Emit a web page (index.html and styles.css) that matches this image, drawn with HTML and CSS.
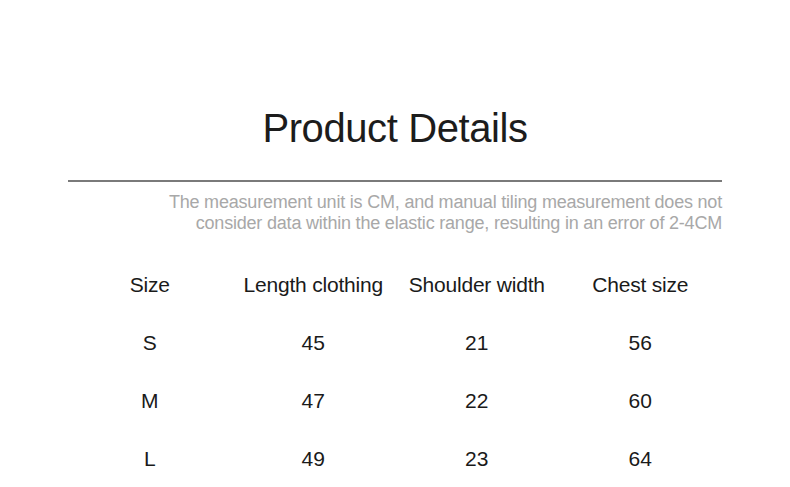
FILE: index.html
```html
<!DOCTYPE html>
<html>
<head>
<meta charset="utf-8">
<link rel="stylesheet" href="styles.css">
</head>
<body>
<div class="page">
  <h1 class="title">Product Details</h1>
  <div class="rule"></div>
  <p class="note">The measurement unit is CM, and manual tiling measurement does not<br>consider data within the elastic range, resulting in an error of 2-4CM</p>
  <div class="table">
    <div class="row head"><span>Size</span><span>Length clothing</span><span>Shoulder width</span><span>Chest size</span></div>
    <div class="row"><span>S</span><span>45</span><span>21</span><span>56</span></div>
    <div class="row"><span>M</span><span>47</span><span>22</span><span>60</span></div>
    <div class="row"><span>L</span><span>49</span><span>23</span><span>64</span></div>
  </div>
</div>
</body>
</html>
```
FILE: styles.css
```css
html, body { margin: 0; padding: 0; background: #fff; }
body { font-family: "Liberation Sans", Arial, sans-serif; color: #1a1a1a; }
.page { width: 654px; margin: 0 auto; padding-top: 104px; }
.title { margin: 0; font-size: 40px; line-height: 48px; font-weight: 400; text-align: center; letter-spacing: -0.4px; color: #1c1c1c; }
.rule { height: 2px; background: #7a7a7a; margin-top: 28px; }
.note { margin: 10px 0 0; font-size: 18px; line-height: 21px; text-align: right; color: #a8a8a8; letter-spacing: -0.2px; }
.table { margin-top: 22px; }
.row { display: grid; grid-template-columns: repeat(4, 1fr); height: 58px; align-items: center; text-align: center; font-size: 21px; color: #1a1a1a; }
.row.head { letter-spacing: -0.2px; }
```
